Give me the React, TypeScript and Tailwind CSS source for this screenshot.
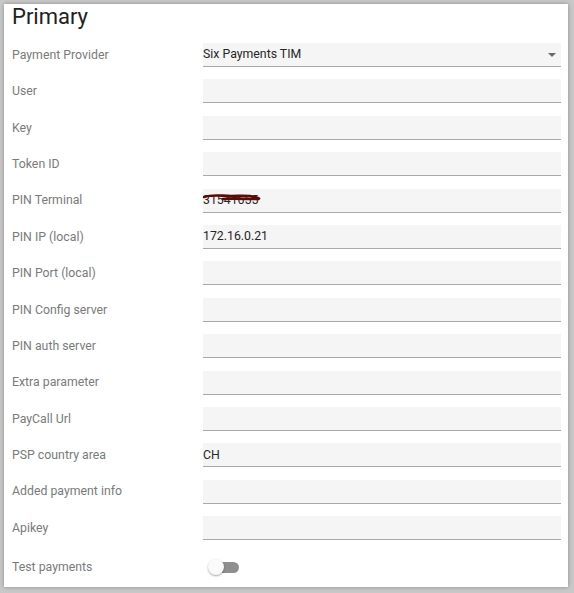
import React from "react";

const fields: { label: string; value?: string; select?: boolean; redacted?: boolean }[] = [
  { label: "Payment Provider", value: "Six Payments TIM", select: true },
  { label: "User" },
  { label: "Key" },
  { label: "Token ID" },
  { label: "PIN Terminal", value: "31541655", redacted: true },
  { label: "PIN IP (local)", value: "172.16.0.21" },
  { label: "PIN Port (local)" },
  { label: "PIN Config server" },
  { label: "PIN auth server" },
  { label: "Extra parameter" },
  { label: "PayCall Url" },
  { label: "PSP country area", value: "CH" },
  { label: "Added payment info" },
  { label: "Apikey" },
];

export default function App() {
  return (
    <div
      className="w-[574px] h-[593px] bg-[#c8c8c8] pl-[4px] pt-[4px] pr-[6px] pb-[6px]"
      style={{ fontFamily: "Roboto, 'Liberation Sans', sans-serif" }}
    >
      <div className="w-full h-full bg-white shadow-[0_0_4px_rgba(0,0,0,0.3)] pl-[8px] pr-[7px] overflow-hidden">
        {/* Title */}
        <div className="h-[32.8px] text-[22px] leading-[24px] text-[#212121] pt-[1px]">Primary</div>

        {/* Fields */}
        {fields.map((f) => (
          <div key={f.label} className="flex items-center h-[36.4px]">
            <div className="w-[191px] text-[12.3px] text-[#7a7a7a]">{f.label}</div>
            <div className="relative flex-1 h-[24px] bg-[#f5f5f5] border-b border-[#a9a9a9] flex items-center text-[12.3px] text-[#262626]">
              <span>{f.value}</span>
              {f.select && (
                <svg className="absolute right-[5px] top-[10px]" width="8" height="4" viewBox="0 0 8 4">
                  <path d="M0 0 L8 0 L4 4 Z" fill="#6b6b6b" />
                </svg>
              )}
              {f.redacted && (
                <svg className="absolute left-[0px] top-[4px]" width="60" height="8" viewBox="0 0 60 8">
                  <path
                    d="M1 4 C10 1, 18 3, 28 3 S45 2, 52 4 S56 6, 50 6 S30 5, 20 6"
                    stroke="#5b0a0a"
                    strokeWidth="2.6"
                    fill="none"
                    strokeLinecap="round"
                  />
                </svg>
              )}
            </div>
          </div>
        ))}

        {/* Toggle row */}
        <div className="flex items-center h-[36px] mt-[3px]">
          <div className="w-[191px] text-[12.3px] text-[#7a7a7a]">Test payments</div>
          <div className="relative w-[36px] h-[16px] flex items-center">
            <div className="ml-[7px] w-[29px] h-[11px] rounded-full bg-[#8f8f8f]" />
            <div className="absolute left-[5px] top-[0px] w-[16px] h-[16px] rounded-full bg-[#fafafa] shadow-[0_1px_2px_rgba(0,0,0,0.35)]" />
          </div>
        </div>
      </div>
    </div>
  );
}
